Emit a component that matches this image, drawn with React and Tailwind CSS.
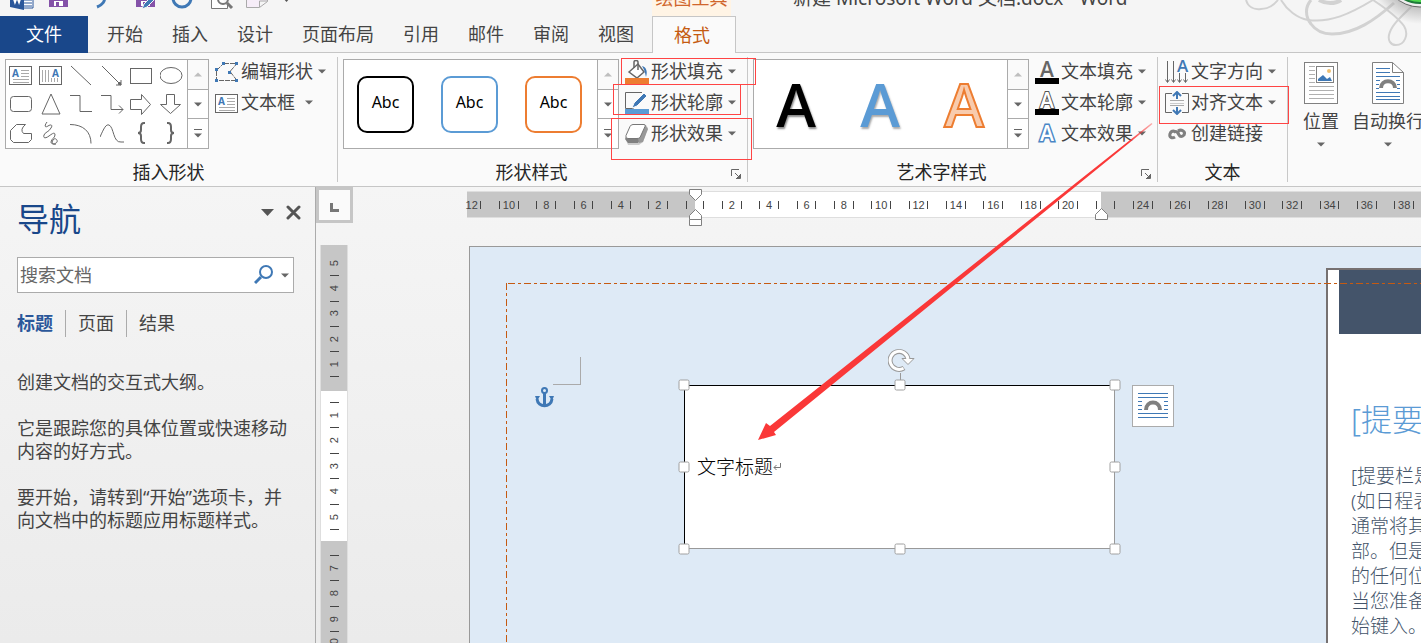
import React from 'react';

const TABS = ['开始', '插入', '设计', '页面布局', '引用', '邮件', '审阅', '视图'];

const Caret = ({ className = '' }) => (
  <svg className={`shrink-0 ${className}`} width="8" height="5" viewBox="0 0 8 5">
    <path d="M0 0.5h8L4 4.5z" fill="#666" />
  </svg>
);

const Icon = ({ w = 24, h = 24, children }) => (
  <svg className="block shrink-0" width={w} height={h} viewBox={`0 0 ${w} ${h}`} fill="none" stroke="#666" strokeWidth="1">
    {children}
  </svg>
);

const TextBoxIcon = () => (
  <Icon>
    <rect x="0.5" y="3.5" width="22" height="18" fill="#fff" />
    <path d="M12 7.5h8M12 10.5h8M12 13.5h8M4 16.5h16M4 19.5h16" stroke="#aaa" />
    <text x="3" y="14" fontSize="10" fontWeight="700" fontFamily="Noto Sans" fill="#3f78b5" stroke="none">A</text>
  </Icon>
);

const VerticalTextBoxIcon = () => (
  <Icon>
    <rect x="0.5" y="3.5" width="22" height="18" fill="#fff" />
    <path d="M3.5 7v12M6.5 7v12M9.5 7v12M12.5 15v4M15.5 15v4M18.5 15v4" stroke="#aaa" />
    <text x="13" y="14" fontSize="10" fontWeight="700" fontFamily="Noto Sans" fill="#3f78b5" stroke="none">A</text>
  </Icon>
);

const SHAPES = [
  { name: '文本框', icon: <TextBoxIcon /> },
  { name: '竖排文本框', icon: <VerticalTextBoxIcon /> },
  { name: '直线', icon: <Icon><path d="M2 3l20 19" /></Icon> },
  { name: '箭头', icon: <Icon><path d="M2 3l19 19M21 17v5h-5" /><path d="M21 22l-3-1 2-2z" fill="#666" /></Icon> },
  { name: '矩形', icon: <Icon><rect x="0.5" y="5.5" width="21" height="15" /></Icon> },
  { name: '椭圆', icon: <Icon><ellipse cx="11" cy="12.5" rx="11" ry="8" /></Icon> },
  { name: '圆角矩形', icon: <Icon><rect x="1.5" y="4.5" width="21" height="15" rx="3" /></Icon> },
  { name: '三角形', icon: <Icon><path d="M12 2l9 20H3z" /></Icon> },
  { name: '肘形连接符', icon: <Icon><path d="M1 3.5h10v16h12" /></Icon> },
  { name: '肘形箭头', icon: <Icon><path d="M1 3.5h10v14h12M19 13.500l4 4-4 4" /></Icon> },
  { name: '右箭头', icon: <Icon><path d="M.5 7.500h11v-5l9 10-9 10v-5h-11z" /></Icon> },
  { name: '下箭头', icon: <Icon><path d="M6.500 2.500h8v10h6l-10 9-10-9h6z" /></Icon> },
  { name: '任意多边形', icon: <Icon><path d="M1.500 18.500v-9l6-6h9q-6 5-2 9h8v6l-3 3h-15z" /></Icon> },
  { name: '自由曲线', icon: <Icon><path d="M8 1C5 5 6 7 9 5s5-1 3 2c-2 4-6 4-7 7s1 4 5 1 6-4 6-1-4 4-4 7 5 2 6 0-2-5-4-2 0 5 3 4" /></Icon> },
  { name: '弧形', icon: <Icon><path d="M1 3.500c13 0 21 7 21 19" /></Icon> },
  { name: '曲线', icon: <Icon><path d="M0 16C4 7 6 3 9 4c5 2 4 18 12 17h3" /></Icon> },
  { name: '左大括号', icon: <Icon><path d="M15 2h-1c-2 0-3 1-3 4v3c0 2-1 3-3 3 2 0 3 1 3 3v3c0 3 1 4 3 4h1" strokeWidth="2" /></Icon> },
  { name: '右大括号', icon: <Icon><path d="M7 2h1c2 0 3 1 3 4v3c0 2 1 3 3 3-2 0-3 1-3 3v3c0 3-1 4-3 4h-1" strokeWidth="2" /></Icon> },
];

const EditShapeIcon = () => (
  <Icon>
    <path d="M9 3.500h13l-7 8 7 9H1.500v-10l7-7" strokeDasharray="5 1" />
    <path d="M7 2h3v3H7zM20 2h3v3h-3zM0 8h3v3H0zM13 11h3v3h-3zM0 19h3v3H0zM20 19h3v3h-3z" fill="#3f78b5" stroke="none" />
  </Icon>
);

const BucketIcon = () => (
  <Icon>
    <path d="M4 12l9-8 6 8-7 6z" fill="#fff" strokeWidth="1.500" />
    <path d="M9 8V2c0-2 4-2 4 0v8" strokeWidth="1.500" />
    <path d="M17 6c4 1 6 5 4 11-1-4-1-6-4-11z" fill="#3f78b5" stroke="none" />
    <rect y="18" width="24" height="6" fill="#ed7d31" stroke="none" />
  </Icon>
);

const OutlineIcon = () => (
  <Icon>
    <path d="M17 1.500H.5v16h8" />
    <path d="M7 17l2-5L19 2l3 3-10 10z" fill="#3f78b5" stroke="#fafafa" />
    <rect y="18" width="24" height="6" fill="#5b9bd5" stroke="none" />
  </Icon>
);

const EffectIcon = () => (
  <Icon>
    <path d="M8 3h13l2 3-5 14-4 3H3l-2-5z" fill="#ccc" stroke="none" />
    <path d="M1 15l2-3h10l3 4-3 5H3l-3-4z" fill="#808080" stroke="none" />
    <path d="M20 3l3 4-5 13-4 1-1-5z" fill="#999" stroke="none" />
    <path d="M8 2.500h11q2 0 1 2l-5 11q-1 1-3 1H3q-3 0-2-3l4-9q1-2 3-2z" fill="#fff" stroke="#777" />
  </Icon>
);

const LetterIcon = ({ fill, stroke, bar, glow }) => (
  <Icon>
    <text
      x="12" y={bar ? 17 : 19} textAnchor="middle" fontSize="21" fontWeight="600" fontFamily="Open Sans"
      fill={fill} stroke={stroke} strokeWidth={glow ? 3 : 2} paintOrder="stroke"
    >
      A
    </text>
    {bar && <rect y="18" width="24" height="6" fill="#000" stroke="none" />}
  </Icon>
);

const DirectionIcon = () => (
  <Icon>
    <path d="M2.500 1v21M8.500 1v21M14.500 13v9M20.500 13v9M.5 19.500l2 3 2-3M6.500 19.500l2 3 2-3M12.500 19.500l2 3 2-3M18.500 19.500l2 3 2-3" />
    <text x="12" y="12" fontSize="17" fontWeight="600" fontFamily="Open Sans" fill="#3f78b5" stroke="none">A</text>
  </Icon>
);

const AlignIcon = () => (
  <Icon>
    <path d="M7 2.500H.5v19H7M17 2.500h6.500v19H17" />
    <path d="M5 9.500h14M5 14.500h14" stroke="#aaa" />
    <path d="M5 12.500h14" stroke="#ccc" />
    <path d="M12 1v7M8 5l4-4 4 4M12 16v7M8 19l4 4 4-4" stroke="#3f78b5" strokeWidth="2" />
  </Icon>
);

const LinkIcon = () => (
  <Icon>
    <path d="M10 15c-3 2-6 0-5-3 1-4 7-4 9 1 1 2 3 2 5 0 2-4-3-6-6-4" stroke="#808080" strokeWidth="3" />
    <path d="M9 11c2-3 5-1 5 2" stroke="#808080" strokeWidth="2" />
  </Icon>
);

const PositionIcon = () => (
  <Icon w={34} h={42}>
    <rect x="0.5" y="0.5" width="33" height="41" fill="#fff" stroke="#808080" />
    <path d="M5 4.500h6M5 8.500h6M5 12.500h6M5 16.500h6M5 20.500h6M5 24.500h25M5 28.500h25M5 32.500h25M5 36.500h25" stroke="#b0b0b0" />
    <rect x="12.5" y="4.500" width="17" height="16" fill="#fff" stroke="#808080" />
    <path d="M14 19v-2l5-4 4 4 3-2 2 4z" fill="#3f78b5" stroke="none" />
    <circle cx="25" cy="9" r="2" fill="#f0c070" stroke="none" />
  </Icon>
);

const WrapIcon = () => (
  <Icon w={32} h={42}>
    <path d="M.5.5h20l11 10v31H.5z" fill="#fff" stroke="#808080" />
    <path d="M20.500.5v10h11" stroke="#808080" />
    <path d="M4 6.500h14M4 10.500h14M4 14.500h24M4 18.500h4M24 18.500h4M4 22.500h3M25 22.500h3M4 26.500h3M25 26.500h3M4 30.500h24M4 34.500h24M4 37.500h24" stroke="#3f78b5" />
    <path d="M9 26c0-9 14-9 14 0" stroke="#808080" strokeWidth="4" />
  </Icon>
);

const GalleryScroll = () => (
  <div className="flex w-[21px] shrink-0 flex-col border-l border-[#ababab]">
    <button aria-label="上一行" className="flex flex-1 items-center justify-center bg-[#fafafa]">
      <Caret className="rotate-180 opacity-40" />
    </button>
    <button aria-label="下一行" className="flex flex-1 items-center justify-center border-y border-[#ababab]">
      <Caret />
    </button>
    <button aria-label="更多" className="flex flex-1 flex-col items-center justify-center gap-[3px]">
      <span className="h-px w-2 bg-[#666]" />
      <Caret />
    </button>
  </div>
);

const Gallery = ({ children, className = '' }) => (
  <div className={`mt-[6px] flex h-[90px] border border-[#ababab] bg-white ${className}`}>
    {children}
    <GalleryScroll />
  </div>
);

const SmallButton = ({ icon, label, caret = true, labelClass = '' }) => (
  <button className="flex h-[31px] items-center whitespace-nowrap text-[18px] text-[#444]">
    {icon}
    <span className={`ml-[2px] mr-[5px] ${labelClass}`}>{label}</span>
    {caret && <Caret />}
  </button>
);

const LauncherIcon = () => (
  <Icon w={10} h={10}>
    <path d="M.5 7V.5H8M4 4l5 5M9.500 5v4.500H5" />
    <path d="M9 9V6L6 9z" fill="#666" />
  </Icon>
);

const Group = ({ label, launcher, className = '', children }) => (
  <>
    <section className={`flex shrink-0 flex-col justify-between ${className}`}>
      <div className="flex pl-[5px]">{children}</div>
      <div className="flex h-7 items-center text-[18px] text-[#262626]">
        <h2 className="flex-1 text-center">{label}</h2>
        {launcher && (
          <button aria-label={`${label}选项`} className="flex w-[22px] pl-[6px] pt-1">
            <LauncherIcon />
          </button>
        )}
      </div>
    </section>
    <div className="my-1 w-px shrink-0 bg-[#c8c8c8]" />
  </>
);

const TitleBar = () => (
  <header className="flex h-4 items-end overflow-hidden">
    <div className="flex h-8 w-[652px] shrink-0 items-center pl-[10px]">
      <svg width="290" height="24" viewBox="0 0 290 24" fill="none">
        {/* word */}
        <path d="M12 0h11v20H12" fill="#fff" stroke="#2b579a" />
        <path d="M14 12h8M14 15h8M14 18h8" stroke="#2b579a" />
        <path d="M0 0h14v22L0 19z" fill="#2b579a" />
        <path d="M3 8l2 6 2-5 2 5 2-6" stroke="#fff" strokeWidth="2" />
        {/* save */}
        <path d="M39 0h19v19H39z" fill="#8452a8" />
        <path d="M44 13h9v5h-9z" fill="#fff" />
        <path d="M46 14h3v4h-3z" fill="#8452a8" />
        {/* undo */}
        <path d="M94 8c2 5-2 9-7 11" stroke="#3f78b5" strokeWidth="3" />
        {/* save as */}
        <path d="M126 0h19v19h-19z" fill="#8452a8" />
        <path d="M131 13h9v5h-9z" fill="#fff" />
        <path d="M133 14h3v4h-3z" fill="#8452a8" />
        <path d="M132 21l2-5L145 5l3 3-11 11z" fill="#3f78b5" stroke="#f5f5f5" />
        {/* redo */}
        <circle cx="172" cy="10" r="9" stroke="#3f78b5" strokeWidth="3" />
        {/* preview */}
        <path d="M201.500 0v20.500h16V17" fill="#fff" stroke="#777" />
        <circle cx="213" cy="11" r="5" stroke="#777" strokeWidth="2" />
        <path d="M217 15l5 5" stroke="#777" strokeWidth="3" />
        {/* new */}
        <path d="M236.500 0v19.500h13l8-6V0M249.500 19v-6h8" fill="#f6edf8" stroke="#aaa" />
        <path d="M273 10h7l-3.500 4z" fill="#555" />
      </svg>
    </div>
    <div className="flex h-8 w-[79px] shrink-0 items-center justify-center whitespace-nowrap bg-[#fff4e5] pb-[3px] text-[18px] text-[#d0662c]">
      绘图工具
    </div>
    <h1 className="ml-[62px] flex h-8 items-center whitespace-nowrap pb-[3px] text-[19px] text-[#444]">
      新建 Microsoft Word 文档.docx - Word
    </h1>
  </header>
);

const TabBar = () => (
  <nav className="flex h-[37px] items-stretch text-[18px] text-[#444]">
    <button className="w-[88px] shrink-0 bg-[#19478a] text-white">文件</button>
    <div className="flex shrink-0 gap-[29px] border-b border-[#c6c6c6] pl-[19px] pr-[18px]">
      {TABS.map((tab) => (
        <button key={tab} className="whitespace-nowrap">{tab}</button>
      ))}
    </div>
    <button className="w-[84px] shrink-0 border border-b-0 border-[#c6c6c6] bg-[#fafafa] pr-1 text-[#c55a11]">格式</button>
    <div className="flex-1 border-b border-[#c6c6c6]" />
  </nav>
);

const Ribbon = () => (
  <div className="flex h-[134px] overflow-hidden border-b border-[#c6c6c6] bg-[#fafafa]">
    <Group label="插入形状" className="w-[337px]">
      <Gallery className="w-[204px]">
        <div className="grid flex-1 grid-cols-6">
          {SHAPES.map((s) => (
            <button key={s.name} aria-label={s.name} className="flex items-center justify-center">{s.icon}</button>
          ))}
        </div>
      </Gallery>
      <div className="ml-[6px] pt-[3px]">
        <SmallButton icon={<EditShapeIcon />} label="编辑形状" />
        <SmallButton icon={<TextBoxIcon />} label="文本框" labelClass="pr-[5px]" />
      </div>
    </Group>

    <Group label="形状样式" launcher className="w-[409px]">
      <Gallery className="w-[276px]">
        <div className="flex flex-1 items-center gap-[27px] pl-[13px] text-base text-black">
          <button className="size-[57px] rounded-[10px] border-2 border-black pb-1">Abc</button>
          <button className="size-[57px] rounded-[10px] border-2 border-[#5b9bd5] pb-1">Abc</button>
          <button className="size-[57px] rounded-[10px] border-2 border-[#ed7d31] pb-1">Abc</button>
        </div>
      </Gallery>
      <div className="ml-[6px] pt-[3px]">
        <SmallButton icon={<BucketIcon />} label="形状填充" />
        <SmallButton icon={<OutlineIcon />} label="形状轮廓" />
        <SmallButton icon={<EffectIcon />} label="形状效果" />
      </div>
    </Group>

    <Group label="艺术字样式" launcher className="w-[409px]">
      <Gallery className="w-[276px]">
        <div className="flex flex-1 items-center text-[60px] leading-none font-semibold [font-family:'Open_Sans',sans-serif]">
          <button className="w-[84px] text-black [text-shadow:1px_2px_2px_#888]">A</button>
          <button className="w-[84px] text-[#5b9bd5] [text-shadow:1px_2px_2px_#aaa]">A</button>
          <button className="w-[84px] text-[#f8cbad] [-webkit-text-stroke:2px_#ed7d31]">A</button>
        </div>
      </Gallery>
      <div className="ml-[6px] pt-[3px]">
        <SmallButton icon={<LetterIcon fill="#666" stroke="none" bar />} label="文本填充" />
        <SmallButton icon={<LetterIcon fill="#fff" stroke="#555" bar />} label="文本轮廓" />
        <SmallButton icon={<LetterIcon fill="#fff" stroke="#4a86c5" glow />} label="文本效果" />
      </div>
    </Group>

    <Group label="文本" className="w-[129px]">
      <div className="pl-[2px] pt-[3px]">
        <SmallButton icon={<DirectionIcon />} label="文字方向" />
        <SmallButton icon={<AlignIcon />} label="对齐文本" />
        <SmallButton icon={<LinkIcon />} label="创建链接" caret={false} />
      </div>
    </Group>

    <div className="flex items-start gap-[13px] pl-[15px] pt-[9px] text-[18px] text-[#444]">
      <button className="flex flex-col items-center whitespace-nowrap">
        <PositionIcon />
        <span className="mb-1 leading-[34px]">位置</span>
        <Caret />
      </button>
      <button className="flex flex-col items-center whitespace-nowrap">
        <WrapIcon />
        <span className="mb-1 leading-[34px]">自动换行</span>
        <Caret />
      </button>
    </div>
  </div>
);

const NavigationPane = () => (
  <aside className="w-[316px] shrink-0 border-r border-[#ababab] pl-[17px] pr-[21px] text-[18px] text-[#444]">
    <div className="flex h-[64px] items-center justify-between">
      <h2 className="text-[32px] text-[#19478a]">导航</h2>
      <div className="-mr-[7px] mb-[14px] flex items-center gap-3">
        <button aria-label="任务窗格选项">
          <svg width="13" height="7" viewBox="0 0 13 7"><path d="M0 0h13L6.500 7z" fill="#555" /></svg>
        </button>
        <button aria-label="关闭">
          <svg width="15" height="15" viewBox="0 0 15 15"><path d="M2 2l11 11M13 2L2 13" stroke="#555" strokeWidth="3" strokeLinecap="round" /></svg>
        </button>
      </div>
    </div>
    <div className="mt-[6px] flex h-9 items-center border border-[#ababab] bg-white pl-[2px] pr-1">
      <input
        aria-label="搜索文档"
        placeholder="搜索文档"
        className="min-w-0 flex-1 outline-none placeholder:text-[#666]"
      />
      <button aria-label="搜索">
        <svg width="20" height="20" viewBox="0 0 20 20" fill="none" stroke="#3f78b5">
          <circle cx="12" cy="7" r="6" strokeWidth="2" />
          <path d="M7 12l-6 6" strokeWidth="3" />
        </svg>
      </button>
      <button aria-label="搜索选项" className="ml-[7px]"><Caret /></button>
    </div>
    <div className="mt-[17px] flex h-[27px] items-center">
      <button className="pr-3 font-bold text-[#2b579a]">标题</button>
      <button className="h-full border-x border-[#ababab] px-3">页面</button>
      <button className="pl-3">结果</button>
    </div>
    <div className="mt-[34px] -mr-2 space-y-[23px] leading-[23px]">
      <p>创建文档的交互式大纲。</p>
      <p>它是跟踪您的具体位置或快速移动<br />内容的好方式。</p>
      <p>要开始，请转到“开始”选项卡，并<br />向文档中的标题应用标题样式。</p>
    </div>
  </aside>
);

// half-unit slots: every 4th holds a number, odd ones hold a tick
const range = (from, to) => Array.from({ length: to - from + 1 }, (_, i) => from + i);

const HSlots = ({ slots, className = '' }) => (
  <div className={`flex h-full items-center ${className}`}>
    {slots.map((k) => (
      <span key={k} className="flex w-0 flex-1 justify-center">
        {k % 2 === 1 && <span className="h-2 w-px bg-[#444]" />}
        {k % 4 === 0 && k !== 44 && <span>{k / 2}</span>}
      </span>
    ))}
  </div>
);

const HorizontalRuler = () => (
  <div className="relative ml-[114px] mt-1 flex h-[27px] flex-1 border-y border-[#dedede] text-[11px] text-[#444] [font-family:'Liberation_Sans',sans-serif]">
    <div className="w-[228px] shrink-0 bg-[#c6c6c6] pr-1 pt-px"><HSlots slots={range(1, 24).reverse()} /></div>
    <div className="w-[406px] shrink-0 bg-white pl-1 pt-px"><HSlots slots={range(1, 43)} /></div>
    <div className="flex-1 overflow-hidden bg-[#c6c6c6] pt-px"><HSlots slots={range(44, 79)} className="w-[336px]" /></div>
    <svg className="absolute -top-[3px] left-[222px]" width="13" height="38" viewBox="0 0 13 38" fill="#fff" stroke="#808080">
      <path d="M.5.5h12v5l-6 6-6-6z" />
      <path d="M6.500 20.500l6 6v4H.5v-4z" />
      <path d="M.5 30.500h12v6H.5z" />
    </svg>
    <svg className="absolute top-[16px] left-[628px]" width="13" height="13" viewBox="0 0 13 13" fill="#fff" stroke="#808080">
      <path d="M6.500.5l6 6v5H.5v-5z" />
    </svg>
  </div>
);

const VSlots = ({ items, className = '' }) => (
  <div className={`flex flex-col items-center ${className}`}>
    {items.map((v, i) => (
      <span key={i} className="flex h-0 flex-1 items-center justify-center">
        {v === '-' ? <span className="h-px w-[9px] bg-[#444]" /> : <span className="-rotate-90">{v}</span>}
      </span>
    ))}
  </div>
);

const VerticalRuler = () => (
  <div className="ml-[4px] flex w-7 shrink-0 flex-col border-x border-[#dedede] bg-[#c6c6c6] text-[11px] text-[#444] [font-family:'Liberation_Sans',sans-serif]">
    <VSlots className="h-[146px] shrink-0 pb-2 pl-px pt-3" items={[5, '-', 4, '-', 3, '-', 2, '-', 1, '-']} />
    <VSlots className="h-[150px] shrink-0 bg-white pb-[5px] pl-px pt-[5px]" items={['-', 1, '-', 2, '-', 3, '-', 4, '-', 5, '-']} />
    <VSlots className="h-[110px] shrink-0 pl-px pt-2" items={['-', 7, '-', 8, '-', 9, '-', 10]} />
  </div>
);

const HANDLES = [
  'left-0 top-0', 'left-1/2 top-0', 'left-full top-0',
  'left-0 top-1/2', 'left-full top-1/2',
  'left-0 top-full', 'left-1/2 top-full', 'left-full top-full',
];

const TextBox = () => (
  <div className="absolute left-[214px] top-[138px] h-[164px] w-[431px] border border-[#999] border-l-black border-t-black bg-white">
    <div className="flex h-full items-center pl-3 text-[19px] font-light text-black">
      文字标题
      <svg width="8" height="8" viewBox="0 0 8 8" fill="none" stroke="#777"><path d="M7.500 0v4.500H1M3.500 2L1 4.500 3.500 7" /></svg>
    </div>
    <div className="absolute -inset-px">
      <span className="absolute -top-3 left-1/2 h-3 w-px bg-[#999]" />
      {HANDLES.map((pos) => (
        <span key={pos} className={`absolute size-[11px] -translate-x-1/2 -translate-y-1/2 rounded-[2px] border border-[#a0a0a0] bg-white ${pos}`} />
      ))}
      <svg className="absolute -top-[38px] left-1/2 -ml-[12px]" width="27" height="25" viewBox="0 0 27 25" fill="none">
        <path d="M16 21a9 9 0 1 1 4-9" stroke="#999" strokeWidth="5" />
        <path d="M14 11.500h12l-6 6z" fill="#fff" stroke="#999" />
        <path d="M15.500 21.200a9 9 0 1 1 4.500-9.200" stroke="#fff" strokeWidth="3" />
      </svg>
      <button aria-label="布局选项" className="absolute top-0 left-[448px] flex size-[42px] items-center justify-center border border-[#ababab] bg-white">
        <Icon w={30} h={26}>
          <path d="M0 .5h30M0 4.500h30M0 8.500h4M26 8.500h4M0 12.500h4M26 12.500h4M0 16.500h4M26 16.500h4M0 20.500h30M0 24.500h30" stroke="#3f78b5" />
          <path d="M8 17c0-10 14-10 14 0" stroke="#808080" strokeWidth="4" />
        </Icon>
      </button>
    </div>
  </div>
);

const Sidebar = () => (
  <div className="absolute top-[21px] right-0 bottom-0 left-[856px] overflow-hidden whitespace-nowrap border-l-2 border-t-2 border-[#767171] bg-white pl-[11px] font-light text-[#44546a]">
    <div className="h-16 bg-[#44546a]" />
    <div className="pl-3">
      <h3 className="mt-[62px] text-[31px] leading-[46px] text-[#5b9bd5]">[提要栏标题]</h3>
      <p className="mt-[22px] text-[19px] leading-[25px]">
        [提要栏是<br />(如日程表<br />通常将其<br />部。但是<br />的任何位<br />当您准备<br />始键入。
      </p>
    </div>
  </div>
);

const Page = () => (
  <div className="relative ml-[121px] mt-px flex-1 overflow-hidden border-l border-t border-[#999] bg-[#deeaf6]">
    <svg className="absolute left-[65px] top-[140px]" width="20" height="22" viewBox="0 0 20 22" fill="none" stroke="#3f78b5">
      <circle cx="9.500" cy="3.500" r="2.500" strokeWidth="2" />
      <path d="M9.500 6v14" strokeWidth="3" />
      <path d="M2 12c1 9 14 9 15 0" strokeWidth="3" />
      <path d="M0 9h5l-3 5zM19 9h-5l3 5z" fill="#3f78b5" stroke="none" />
    </svg>
    <span className="absolute left-[83px] top-[110px] size-7 border-b border-r border-[#aaa]" />
    <TextBox />
    <Sidebar />
    <svg className="absolute inset-0 size-full" fill="none" stroke="#c55a11" strokeDasharray="7 3 3 3" shapeRendering="crispEdges">
      <path d="M36.500 36v2000M38 36.500h4000" />
    </svg>
  </div>
);

// red callouts drawn over the ribbon and the document
const Annotations = () => (
  <svg className="pointer-events-none absolute left-0 top-0" width="1421" height="643" viewBox="0 0 1421 643" fill="none">
    <defs>
      <linearGradient id="tail" gradientUnits="userSpaceOnUse" x1="758" y1="440" x2="1152" y2="124">
        <stop offset="0.94" stopColor="#fa3838" />
        <stop offset="1" stopColor="#fa3838" stopOpacity="0.4" />
      </linearGradient>
    </defs>
    <g stroke="#f44" shapeRendering="crispEdges">
      <rect x="621.5" y="58.500" width="134" height="26" />
      <rect x="613.5" y="84.500" width="127" height="30" />
      <rect x="611.5" y="118.500" width="140" height="41" />
      <rect x="1159.500" y="86.500" width="129" height="37" />
    </g>
    <path d="M758 440l8-17 4 3L1151.500 123l1 1L774 432l2 3z" fill="url(#tail)" />
  </svg>
);

const Flourish = () => (
  <svg className="pointer-events-none absolute right-0 top-0" width="180" height="50" viewBox="0 0 180 50" fill="none" stroke="#d2d2d2">
    <defs>
      <radialGradient id="orb" cx="0.5" cy="0.5" r="0.5">
        <stop offset="0.65" stopColor="#999" stopOpacity="0.6" />
        <stop offset="1" stopColor="#999" stopOpacity="0" />
      </radialGradient>
    </defs>
    <path d="M5 0c2 7 8 10 15 9 7 0 13-4 17-9" strokeWidth="2" />
    <path d="M40 0c6 10 16 18 27 20 22 3 42-6 65-20" strokeWidth="2" />
    <path d="M70 0c-6 7-6 16 0 24 5 7 12 10 21 10 23 0 43-14 62-31" strokeWidth="3" />
    <path d="M78 0c7 4 16 4 22 0" strokeWidth="4" />
    <path d="M132 0c12 8 25 18 31 26 5 8 1 19-8 19-6 0-8-5-7-10 2-10 12-18 23-29" strokeWidth="2" />
    <circle cx="179" cy="-28" r="52" fill="url(#orb)" stroke="none" />
    <circle cx="179" cy="-30" r="37" fill="#eee" stroke="#666" />
    <circle cx="179" cy="-30" r="33" fill="#4fd84f" stroke="#1d7a3a" strokeWidth="2" />
  </svg>
);

const App = () => (
  <div className="relative flex h-screen flex-col overflow-hidden bg-[#f5f5f5] [font-family:'Noto_Sans','Noto_Sans_CJK_SC',sans-serif]">
    <Flourish />
    <TitleBar />
    <TabBar />
    <Ribbon />
    <div className="flex min-h-0 flex-1 bg-linear-to-b from-[#f5f5f5] to-[#ebebeb]">
      <NavigationPane />
      <main className="flex min-w-0 flex-1 flex-col">
        <div className="flex h-[58px] shrink-0 items-start">
          <div className="flex h-9 w-[37px] shrink-0 items-center justify-center border-[3px] border-[#c6c6c6] bg-[#fafafa]">
            <span className="mt-1 size-[9px] border-b-[3px] border-l-[3px] border-[#777]" />
          </div>
          <HorizontalRuler />
        </div>
        <div className="flex min-h-0 flex-1 overflow-hidden">
          <VerticalRuler />
          <Page />
        </div>
      </main>
    </div>
    <Annotations />
  </div>
);

export default App;
